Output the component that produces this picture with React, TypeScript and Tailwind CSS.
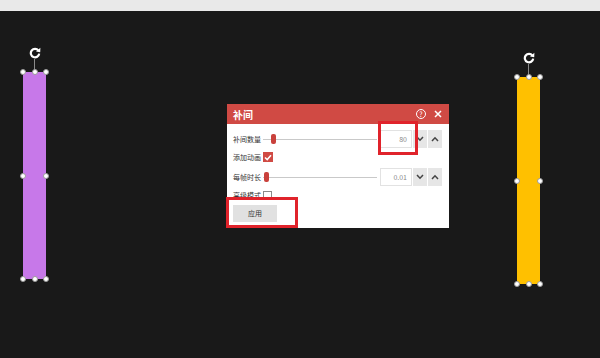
import React from 'react';

const font = { fontFamily: '"Noto Sans CJK SC", "Noto Sans", sans-serif' };

const Handle: React.FC<{ className: string }> = ({ className }) => (
  <div className={`absolute w-[6px] h-[6px] rounded-full bg-white border border-[#9a9a9a] ${className}`} />
);

const RotateIcon: React.FC = () => (
  <svg width="12" height="12" viewBox="0 0 12 12" className="block">
    <path d="M9.4 3.6 A4.2 4.2 0 1 0 10.2 6.6" fill="none" stroke="#ffffff" strokeWidth="2.2" />
    <path d="M11.4 0.8 L11.2 5.2 L7 4.4 Z" fill="#ffffff" />
  </svg>
);

// selected bar shape with its resize handles
const Bar: React.FC<{ color: string; className: string }> = ({ color, className }) => (
  <div className={`absolute w-[23px] ${className}`}>
    <div className="absolute left-1/2 -translate-x-1/2 -top-[25px] flex flex-col items-center">
      <RotateIcon />
      <div className="w-px h-[12px] bg-[#8a8a8a]" />
    </div>
    <div className={`w-full h-full ${color}`} />
    <Handle className="-left-[3px] -top-[3px]" />
    <Handle className="left-1/2 -translate-x-1/2 -top-[3px]" />
    <Handle className="-right-[3px] -top-[3px]" />
    <Handle className="-left-[3px] top-1/2 -translate-y-1/2" />
    <Handle className="-right-[3px] top-1/2 -translate-y-1/2" />
    <Handle className="-left-[3px] -bottom-[3px]" />
    <Handle className="left-1/2 -translate-x-1/2 -bottom-[3px]" />
    <Handle className="-right-[3px] -bottom-[3px]" />
  </div>
);

const Chevron: React.FC<{ up?: boolean }> = ({ up }) => (
  <svg width="8" height="6" viewBox="0 0 8 6">
    <path d={up ? 'M1 5 L4 1.8 L7 5' : 'M1 1 L4 4.2 L7 1'} fill="none" stroke="#444" strokeWidth="1.5" />
  </svg>
);

const Slider: React.FC<{ thumb: number }> = ({ thumb }) => (
  <div className="relative flex-1 h-full flex items-center">
    <div className="w-full h-px bg-[#c9c9c9]" />
    <div className="absolute top-1/2 -translate-y-1/2 w-[5px] h-[10px] rounded-[2px] bg-[#c9413c]" style={{ left: thumb }} />
  </div>
);

const NumberField: React.FC<{ value: string }> = ({ value }) => (
  <div className="flex items-center gap-px h-full ml-[3px]">
    <div className="w-[32px] h-full border border-[#e2e2e2] bg-white flex items-center justify-end pr-[4px] text-[7px] text-[#8a8a8a]">
      {value}
    </div>
    <div className="w-[14px] h-full bg-[#e6e6e6] flex items-center justify-center">
      <Chevron />
    </div>
    <div className="w-[14px] h-full bg-[#e6e6e6] flex items-center justify-center">
      <Chevron up />
    </div>
  </div>
);

const App: React.FC = () => {
  return (
    <div className="relative w-[600px] h-[358px] bg-[#191919] overflow-hidden" style={font}>
      <div className="h-[11px] bg-[#e9e9e9]" />

      <Bar color="bg-[#c778e9]" className="left-[23px] top-[72px] h-[207px]" />
      <Bar color="bg-[#ffc000]" className="left-[517px] top-[77px] h-[207px]" />

      {/* 补间 dialog */}
      <div className="absolute left-[227px] top-[104px] w-[222px] h-[124px] bg-white flex flex-col">
        <div className="h-[20px] bg-[#d04a44] flex items-center pl-[6px] pr-[7px]">
          <span className="text-[10px] font-bold text-white">补间</span>
          <div className="ml-auto flex items-center gap-[8px]">
            <div className="w-[10px] h-[10px] rounded-full border border-white flex items-center justify-center text-[7px] leading-none text-white">?</div>
            <svg width="8" height="8" viewBox="0 0 8 8">
              <path d="M1 1 L7 7 M7 1 L1 7" stroke="#ffffff" strokeWidth="1.5" />
            </svg>
          </div>
        </div>

        <div className="flex flex-col pt-[6px] px-[6px] text-[7px] text-[#333]">
          <div className="h-[18px] flex items-center pr-px">
            <span className="w-[30px]">补间数量</span>
            <Slider thumb={8} />
            <NumberField value="80" />
          </div>
          <div className="h-[18px] flex items-center">
            <span className="w-[30px]">添加动画</span>
            <div className="w-[10px] h-[10px] bg-[#d04a44] flex items-center justify-center">
              <svg width="8" height="7" viewBox="0 0 8 7">
                <path d="M1 3.5 L3.2 5.6 L7 1.2" fill="none" stroke="#ffffff" strokeWidth="1.5" />
              </svg>
            </div>
          </div>
          <div className="h-[18px] mt-[2px] flex items-center pr-px">
            <span className="w-[30px]">每帧时长</span>
            <Slider thumb={1} />
            <NumberField value="0.01" />
          </div>
          <div className="h-[16px] mt-px flex items-center">
            <span className="w-[30px]">高级模式</span>
            <div className="w-[9px] h-[9px] bg-white border border-[#8a8a8a]" />
          </div>
          <div className="mt-[2px] w-[44px] h-[17px] bg-[#e1e1e1] flex items-center justify-center text-[7px] text-[#333]">
            应用
          </div>
        </div>
      </div>

      {/* red annotation boxes */}
      <div className="absolute left-[378px] top-[121px] w-[40px] h-[34px] border-[3px] border-[#e0232b]" />
      <div className="absolute left-[226px] top-[197px] w-[72px] h-[31px] border-[3px] border-[#e0232b]" />
    </div>
  );
};

export default App;
